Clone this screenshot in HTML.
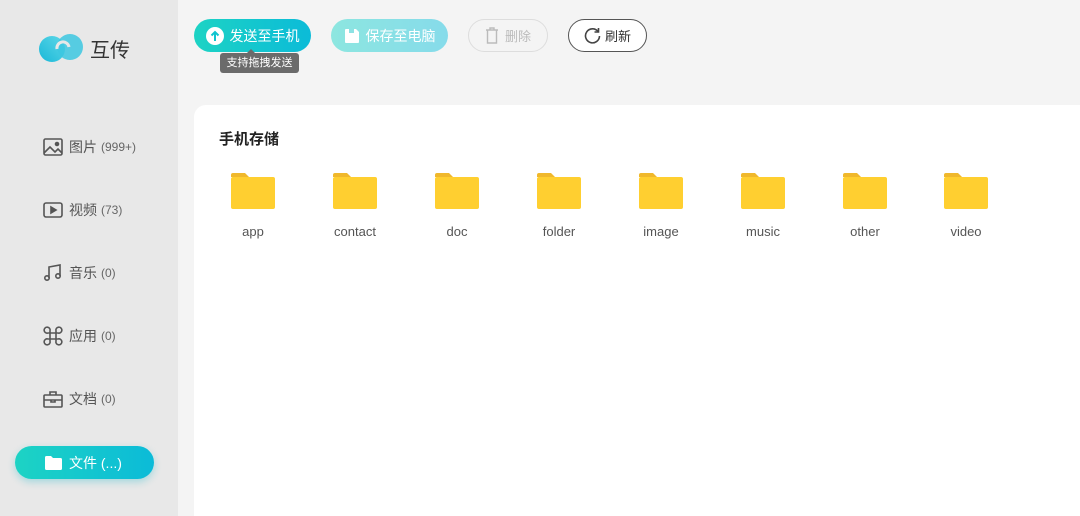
<!DOCTYPE html>
<html><head><meta charset="utf-8"><style>
*{margin:0;padding:0;box-sizing:border-box}
html,body{width:1080px;height:516px;overflow:hidden}
body{background:#f4f4f4;font-family:"Liberation Sans","Noto Sans CJK SC",sans-serif;position:relative}
.side{position:absolute;left:0;top:0;width:178px;height:516px;background:#e8e8e8}
.logo{position:absolute;left:38px;top:32px;display:flex;align-items:center}
.logo span{font-size:20px;color:#333;margin-left:4px}
.nav{position:absolute;left:43px;display:flex;align-items:center;font-size:14px;color:#555}
.nav svg{margin-right:6px}
.nav small{font-size:12px;margin-left:4px;color:#666}
.act{position:absolute;left:15px;top:446px;width:139px;height:33px;border-radius:17px;background:linear-gradient(90deg,#1dd3c4,#0bbbd8);box-shadow:0 3px 8px rgba(0,180,200,.3);color:#fff;font-size:14px;display:flex;align-items:center;padding-left:30px}
.act svg{margin-right:7px}
.btn{position:absolute;top:19px;height:33px;border-radius:17px;display:flex;align-items:center;justify-content:center;font-size:14px}
.card{position:absolute;left:194px;top:105px;width:886px;height:411px;background:#fff;border-radius:12px 0 0 0}
.title{position:absolute;left:219px;top:128px;font-size:15px;font-weight:bold;color:#222}
.f{position:absolute;top:172px;width:80px;text-align:center;font-size:13px;color:#555}
.f svg{display:block;margin:0 auto 14px}
.tip{position:absolute;left:220px;top:53px;width:79px;height:20px;background:#6b6b6b;color:#fff;font-size:11px;border-radius:3px;text-align:center;line-height:20px}
.tip:before{content:"";position:absolute;left:27px;top:-4px;border:4px solid transparent;border-top:0;border-bottom-color:#6b6b6b}
</style></head><body>
<div class="side">
<div class="logo"><svg width="48" height="32" viewBox="0 0 48 32"><defs><linearGradient id="g" x1="0" y1="1" x2="1" y2="0"><stop offset="0" stop-color="#1ab8d8"/><stop offset="1" stop-color="#5fd8e8"/></linearGradient></defs><circle cx="14" cy="17" r="13" fill="url(#g)"/><circle cx="32" cy="15" r="13" fill="#3cc7e0" opacity=".85"/><path d="M19 17 a6 6 0 0 1 12 -2" stroke="#e8e8e8" stroke-width="3" fill="none"/></svg><span>互传</span></div>
<div class="nav" style="top:137px"><svg width="20" height="18" viewBox="0 0 20 18" fill="none" stroke="#555" stroke-width="1.6"><rect x="1" y="1" width="18" height="16" rx="1.5"/><path d="M1 15l6-6 5 5 3-3 4 4"/><circle cx="14" cy="6" r="1.5" fill="#555"/></svg>图片<small>(999+)</small></div>
<div class="nav" style="top:200px"><svg width="20" height="18" viewBox="0 0 20 18" fill="none" stroke="#555" stroke-width="1.6"><rect x="1" y="2" width="18" height="14" rx="2"/><path d="M8 6v6l5-3z" fill="#555"/></svg>视频<small>(73)</small></div>
<div class="nav" style="top:263px"><svg width="20" height="18" viewBox="0 0 20 18" fill="none" stroke="#555" stroke-width="1.6"><path d="M6 14V3l11-2v11"/><circle cx="4" cy="14" r="2.2"/><circle cx="15" cy="12" r="2.2"/></svg>音乐<small>(0)</small></div>
<div class="nav" style="top:326px"><svg width="20" height="20" viewBox="0 0 20 20" fill="none" stroke="#555" stroke-width="1.6"><path d="M7 7H5a3 3 0 1 1 2-2zM13 7h2a3 3 0 1 0-2-2zM7 13H5a3 3 0 1 0 2 2zM13 13h2a3 3 0 1 1-2 2zM7 7h6v6H7z"/></svg>应用<small>(0)</small></div>
<div class="nav" style="top:389px"><svg width="20" height="18" viewBox="0 0 20 18" fill="none" stroke="#555" stroke-width="1.6"><rect x="1" y="5" width="18" height="12" rx="1"/><path d="M7 5V2h6v3M1 10h18M8 10v2h4v-2"/></svg>文档<small>(0)</small></div>
<div class="act"><svg width="17" height="14" viewBox="0 0 17 14"><path d="M0 1.5A1.5 1.5 0 0 1 1.5 0H6l2 2h7.5A1.5 1.5 0 0 1 17 3.5v9a1.5 1.5 0 0 1-1.5 1.5h-14A1.5 1.5 0 0 1 0 12.5z" fill="#fff"/></svg>文件 (...)</div>
</div>
<div class="btn" style="left:194px;width:117px;background:linear-gradient(90deg,#1dd3c4,#0bbbd8);color:#fff"><svg width="18" height="18" viewBox="0 0 18 18" style="margin-right:6px"><circle cx="9" cy="9" r="9" fill="#fff"/><path d="M9 14V5M5.5 8.5 9 5l3.5 3.5" stroke="#10c4cf" stroke-width="2" fill="none"/></svg>发送至手机</div>
<div class="tip">支持拖拽发送</div>
<div class="btn" style="left:331px;width:117px;background:linear-gradient(90deg,#8de6e0,#86dbea);color:#fff"><svg width="16" height="16" viewBox="0 0 16 16" style="margin-right:6px"><path d="M1 2a1 1 0 0 1 1-1h10l3 3v10a1 1 0 0 1-1 1H2a1 1 0 0 1-1-1z" fill="#fff"/><rect x="5" y="1" width="5" height="4" fill="#8de2e4"/></svg>保存至电脑</div>
<div class="btn" style="left:468px;width:80px;border:1px solid #ddd;color:#bbb;font-size:13px"><svg width="14" height="17" viewBox="0 0 14 17" fill="none" stroke="#bbb" stroke-width="1.4" style="margin-right:6px"><path d="M1 3h12M5 3V1h4v2M2.5 3v13h9V3"/></svg>删除</div>
<div class="btn" style="left:568px;width:79px;border:1px solid #555;background:#fff;color:#333;font-size:13px"><svg width="17" height="17" viewBox="0 0 17 17" fill="none" stroke="#444" stroke-width="1.6" style="margin-right:4px"><path d="M14 4.5A7 7 0 1 0 15.5 9"/><path d="M14.5 1v4h-4"/></svg>刷新</div>
<div class="card"></div>
<div class="title">手机存储</div>
<div class="f" style="left:213px"><svg width="44" height="38" viewBox="0 0 44 38"><path d="M0 3a2 2 0 0 1 2-2h12l4 4H0z" fill="#f0b82c"/><rect x="0" y="5" width="44" height="32" rx="2" fill="#ffcf30"/></svg>app</div>
<div class="f" style="left:315px"><svg width="44" height="38" viewBox="0 0 44 38"><path d="M0 3a2 2 0 0 1 2-2h12l4 4H0z" fill="#f0b82c"/><rect x="0" y="5" width="44" height="32" rx="2" fill="#ffcf30"/></svg>contact</div>
<div class="f" style="left:417px"><svg width="44" height="38" viewBox="0 0 44 38"><path d="M0 3a2 2 0 0 1 2-2h12l4 4H0z" fill="#f0b82c"/><rect x="0" y="5" width="44" height="32" rx="2" fill="#ffcf30"/></svg>doc</div>
<div class="f" style="left:519px"><svg width="44" height="38" viewBox="0 0 44 38"><path d="M0 3a2 2 0 0 1 2-2h12l4 4H0z" fill="#f0b82c"/><rect x="0" y="5" width="44" height="32" rx="2" fill="#ffcf30"/></svg>folder</div>
<div class="f" style="left:621px"><svg width="44" height="38" viewBox="0 0 44 38"><path d="M0 3a2 2 0 0 1 2-2h12l4 4H0z" fill="#f0b82c"/><rect x="0" y="5" width="44" height="32" rx="2" fill="#ffcf30"/></svg>image</div>
<div class="f" style="left:723px"><svg width="44" height="38" viewBox="0 0 44 38"><path d="M0 3a2 2 0 0 1 2-2h12l4 4H0z" fill="#f0b82c"/><rect x="0" y="5" width="44" height="32" rx="2" fill="#ffcf30"/></svg>music</div>
<div class="f" style="left:825px"><svg width="44" height="38" viewBox="0 0 44 38"><path d="M0 3a2 2 0 0 1 2-2h12l4 4H0z" fill="#f0b82c"/><rect x="0" y="5" width="44" height="32" rx="2" fill="#ffcf30"/></svg>other</div>
<div class="f" style="left:926px"><svg width="44" height="38" viewBox="0 0 44 38"><path d="M0 3a2 2 0 0 1 2-2h12l4 4H0z" fill="#f0b82c"/><rect x="0" y="5" width="44" height="32" rx="2" fill="#ffcf30"/></svg>video</div>
</body></html>
